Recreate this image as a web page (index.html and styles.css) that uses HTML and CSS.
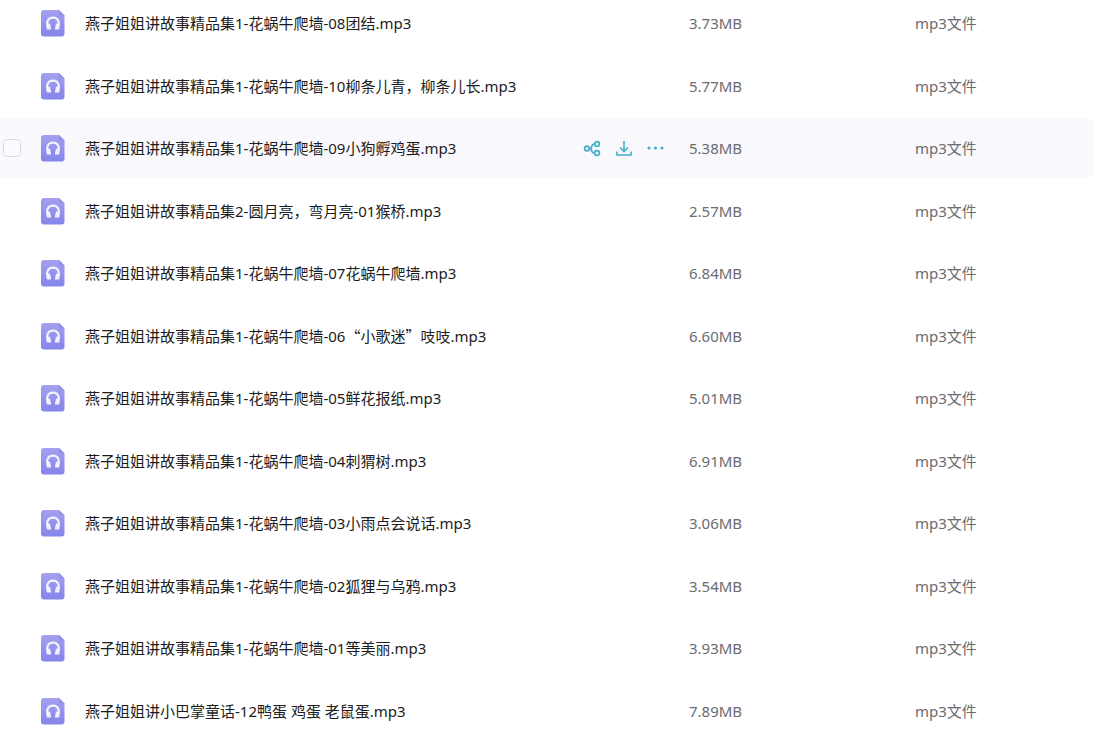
FILE: index.html
```html
<!DOCTYPE html>
<html lang="zh-CN">
<head>
    <meta charset="UTF-8">
    <meta name="viewport" content="width=device-width, initial-scale=1.0">
    <title>文件列表</title>
    <link rel="stylesheet" href="styles.css">
</head>
<body>
    <svg class="sprite" aria-hidden="true">
        <defs>
            <linearGradient id="fileFill" x1="0" y1="0" x2="0" y2="1">
                <stop offset="0" stop-color="#a5a1ee"/>
                <stop offset="1" stop-color="#8584ea"/>
            </linearGradient>
        </defs>
        <symbol id="audio" viewBox="0 0 24 28">
            <path fill="url(#fileFill)" d="M3 1h15l5.500 5.500v18a3 3 0 0 1-3 3H3a3 3 0 0 1-3-3V4a3 3 0 0 1 3-3z"/>
            <path fill="#918ee6" d="M18 1l5.500 5.500h-4a1.500 1.500 0 0 1-1.500-1.500z"/>
            <path fill="none" stroke="#f3f1ff" stroke-width="2.200" d="M7 19.500C5 13.500 6.500 8.700 12 8.700s7 4.800 5 10.800"/>
            <path fill="#f3f1ff" d="M5.500 18.500h4.500v2H6zM18.500 18.500H14v2h4zM6.500 15l2.500-.5 1 5H7zM17.500 15l-2.500-.5-1 5h3z"/>
        </symbol>
        <symbol id="share" viewBox="0 0 18 18">
            <g fill="none" stroke="currentColor" stroke-width="1.700">
                <circle cx="4" cy="9.500" r="2.400"/>
                <circle cx="14" cy="5" r="2.400"/>
                <circle cx="14" cy="14" r="2.400"/>
                <path d="M11.600 5C9 5 8.500 7 8.300 9.500S9.500 14 11.600 14M6.400 9.500h2"/>
            </g>
        </symbol>
        <symbol id="download" viewBox="0 0 18 18">
            <path fill="none" stroke="currentColor" stroke-width="1.600" d="M9 2v10.500M5 8.500l4 4 4-4M2 12.500V16h14v-3.500"/>
        </symbol>
        <symbol id="more" viewBox="0 0 18 18">
            <g fill="currentColor">
                <circle cx="2" cy="9" r="1.600"/>
                <circle cx="8.500" cy="9" r="1.600"/>
                <circle cx="15" cy="9" r="1.600"/>
            </g>
        </symbol>
    </svg>

    <main class="file-list">
        <table class="files">
            <colgroup>
                <col class="col-check">
                <col class="col-name">
                <col class="col-size">
                <col class="col-type">
            </colgroup>
            <tbody>
                <tr>
                    <td></td>
                    <td><div class="file"><svg class="file-icon"><use href="#audio"/></svg><a class="file-name" href="#">燕子姐姐讲故事精品集1-花蜗牛爬墙-08团结.mp3</a></div></td>
                    <td>3.73MB</td>
                    <td>mp3文件</td>
                </tr>
                <tr>
                    <td></td>
                    <td><div class="file"><svg class="file-icon"><use href="#audio"/></svg><a class="file-name" href="#">燕子姐姐讲故事精品集1-花蜗牛爬墙-10柳条儿青，柳条儿长.mp3</a></div></td>
                    <td>5.77MB</td>
                    <td>mp3文件</td>
                </tr>
                <tr class="active">
                    <td><input type="checkbox" class="check" aria-label="选择文件"></td>
                    <td>
                        <div class="file">
                            <svg class="file-icon"><use href="#audio"/></svg>
                            <a class="file-name" href="#">燕子姐姐讲故事精品集1-花蜗牛爬墙-09小狗孵鸡蛋.mp3</a>
                            <div class="actions">
                                <button type="button" class="action" aria-label="分享"><svg><use href="#share"/></svg></button>
                                <button type="button" class="action" aria-label="下载"><svg><use href="#download"/></svg></button>
                                <button type="button" class="action" aria-label="更多"><svg><use href="#more"/></svg></button>
                            </div>
                        </div>
                    </td>
                    <td>5.38MB</td>
                    <td>mp3文件</td>
                </tr>
                <tr>
                    <td></td>
                    <td><div class="file"><svg class="file-icon"><use href="#audio"/></svg><a class="file-name" href="#">燕子姐姐讲故事精品集2-圆月亮，弯月亮-01猴桥.mp3</a></div></td>
                    <td>2.57MB</td>
                    <td>mp3文件</td>
                </tr>
                <tr>
                    <td></td>
                    <td><div class="file"><svg class="file-icon"><use href="#audio"/></svg><a class="file-name" href="#">燕子姐姐讲故事精品集1-花蜗牛爬墙-07花蜗牛爬墙.mp3</a></div></td>
                    <td>6.84MB</td>
                    <td>mp3文件</td>
                </tr>
                <tr>
                    <td></td>
                    <td><div class="file"><svg class="file-icon"><use href="#audio"/></svg><a class="file-name" href="#">燕子姐姐讲故事精品集1-花蜗牛爬墙-06<span class="cjk">“小歌迷”</span>吱吱.mp3</a></div></td>
                    <td>6.60MB</td>
                    <td>mp3文件</td>
                </tr>
                <tr>
                    <td></td>
                    <td><div class="file"><svg class="file-icon"><use href="#audio"/></svg><a class="file-name" href="#">燕子姐姐讲故事精品集1-花蜗牛爬墙-05鲜花报纸.mp3</a></div></td>
                    <td>5.01MB</td>
                    <td>mp3文件</td>
                </tr>
                <tr>
                    <td></td>
                    <td><div class="file"><svg class="file-icon"><use href="#audio"/></svg><a class="file-name" href="#">燕子姐姐讲故事精品集1-花蜗牛爬墙-04刺猬树.mp3</a></div></td>
                    <td>6.91MB</td>
                    <td>mp3文件</td>
                </tr>
                <tr>
                    <td></td>
                    <td><div class="file"><svg class="file-icon"><use href="#audio"/></svg><a class="file-name" href="#">燕子姐姐讲故事精品集1-花蜗牛爬墙-03小雨点会说话.mp3</a></div></td>
                    <td>3.06MB</td>
                    <td>mp3文件</td>
                </tr>
                <tr>
                    <td></td>
                    <td><div class="file"><svg class="file-icon"><use href="#audio"/></svg><a class="file-name" href="#">燕子姐姐讲故事精品集1-花蜗牛爬墙-02狐狸与乌鸦.mp3</a></div></td>
                    <td>3.54MB</td>
                    <td>mp3文件</td>
                </tr>
                <tr>
                    <td></td>
                    <td><div class="file"><svg class="file-icon"><use href="#audio"/></svg><a class="file-name" href="#">燕子姐姐讲故事精品集1-花蜗牛爬墙-01等美丽.mp3</a></div></td>
                    <td>3.93MB</td>
                    <td>mp3文件</td>
                </tr>
                <tr>
                    <td></td>
                    <td><div class="file"><svg class="file-icon"><use href="#audio"/></svg><a class="file-name" href="#">燕子姐姐讲小巴掌童话-12鸭蛋 鸡蛋 老鼠蛋.mp3</a></div></td>
                    <td>7.89MB</td>
                    <td>mp3文件</td>
                </tr>
            </tbody>
        </table>
    </main>
</body>
</html>
```

FILE: styles.css
```css
* {
    margin: 0;
    padding: 0;
    box-sizing: border-box;
}

body {
    background: #fff;
    font-family: 'Noto Sans', 'Noto Sans CJK SC', sans-serif;
    font-size: 15px;
    line-height: 20px;
    color: #6b6b70;
}

.sprite {
    position: absolute;
    width: 0;
    height: 0;
}

/* the list is scrolled a little, so the first row is cut */
.file-list {
    height: 100vh;
    overflow: hidden;
}

.files {
    width: 100%;
    margin-top: -8px;
    table-layout: fixed;
    border-collapse: separate;
    border-spacing: 0;
}

.col-check {
    width: 41px;
}

.col-size {
    width: 226px;
}

.col-type {
    width: 179px;
}

.files td {
    height: 62px;
    border: solid transparent;
    border-width: 2px 0;
    background-clip: padding-box;
    vertical-align: middle;
    white-space: nowrap;
}

.files tr:nth-child(even) td {
    height: 63px;
}

.files .active td {
    background-color: #f9f9fd;
}

.check {
    display: block;
    appearance: none;
    width: 18px;
    height: 18px;
    margin-left: 3px;
    border: 1px solid #dcd9e2;
    border-radius: 4px;
    background: #fcfbfe;
}

.file {
    display: flex;
    align-items: center;
    padding-right: 24px;
}

.file-icon {
    flex: none;
    width: 24px;
    height: 28px;
    margin-right: 20px;
}

.file-name {
    flex: 1;
    color: #1c1c20;
    text-decoration: none;
}

.cjk {
    font-family: 'Noto Sans CJK SC', sans-serif;
}

.actions {
    display: flex;
    gap: 14px;
}

.action {
    width: 18px;
    height: 18px;
    border: none;
    background: none;
    color: #43b0cb;
    cursor: pointer;
}

.action svg {
    display: block;
    width: 18px;
    height: 18px;
}
```
